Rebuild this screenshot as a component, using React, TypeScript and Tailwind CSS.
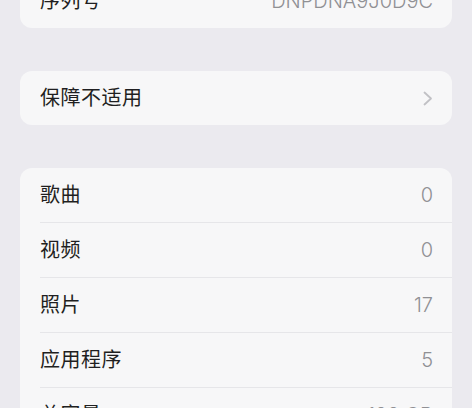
import React from 'react';

const font = { fontFamily: '"Inter", "Noto Sans CJK SC", sans-serif' };

type Row = { label: string; value?: string; chevron?: boolean };

const Chevron = () => (
  <svg width="10" height="15" viewBox="0 0 10 15" fill="none" className="text-[#c1c1c5]">
    <path d="M1.5 1.5L8 7.5L1.5 13.5" stroke="currentColor" strokeWidth="1.8" strokeLinecap="round" strokeLinejoin="round" />
  </svg>
);

const Group: React.FC<{ rows: Row[] }> = ({ rows }) => (
  <div className="mx-5 rounded-xl bg-[#f7f7f8] overflow-hidden">
    {rows.map((row, i) => (
      <div key={row.label} className={i > 0 ? 'ml-5 border-t border-[#e6e6e9]' : 'ml-5'}>
        <div className="h-[54px] pr-[19px] flex items-center justify-between">
          <span className="text-[20px] text-[#1f1f21] tracking-[0.5px]">{row.label}</span>
          {row.value && <span className="text-[20px] text-[#909094] font-light">{row.value}</span>}
          {row.chevron && <Chevron />}
        </div>
      </div>
    ))}
  </div>
);

export default function App() {
  return (
    <div className="h-[408px] w-full overflow-hidden bg-[#ebeaef]" style={font}>
      <div className="-mt-[26px] flex flex-col gap-[43px]">
        <Group rows={[{ label: '序列号', value: 'DNPDNA9J0D9C' }]} />
        <Group rows={[{ label: '保障不适用', chevron: true }]} />
        <Group
          rows={[
            { label: '歌曲', value: '0' },
            { label: '视频', value: '0' },
            { label: '照片', value: '17' },
            { label: '应用程序', value: '5' },
            { label: '总容量', value: '128 GB' },
          ]}
        />
      </div>
    </div>
  );
}
